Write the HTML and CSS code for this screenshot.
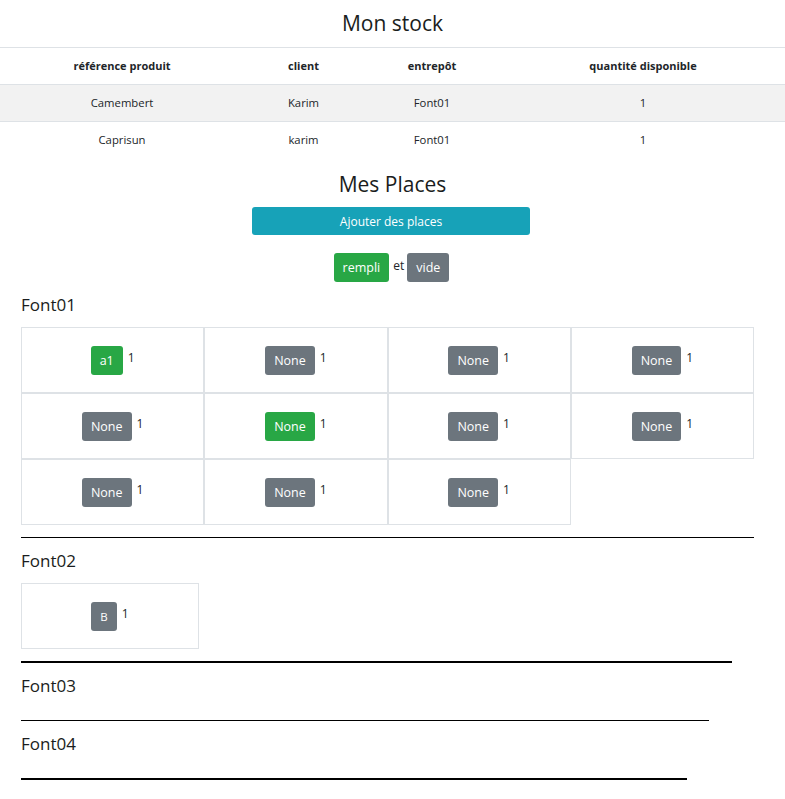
FILE: index.html
```html
<!DOCTYPE html>
<html lang="fr">
<head>
<meta charset="utf-8">
<title>Mon stock</title>
<link rel="stylesheet" href="styles.css">
</head>
<body>
<h2 class="title title-stock">Mon stock</h2>
<table class="stock">
  <colgroup>
    <col class="c1"><col class="c2"><col class="c3"><col class="c4">
  </colgroup>
  <thead>
    <tr><th>référence produit</th><th>client</th><th>entrepôt</th><th>quantité disponible</th></tr>
  </thead>
  <tbody>
    <tr class="striped"><td>Camembert</td><td>Karim</td><td>Font01</td><td>1</td></tr>
    <tr><td>Caprisun</td><td>karim</td><td>Font01</td><td>1</td></tr>
  </tbody>
</table>

<h2 class="title title-places">Mes Places</h2>
<div class="add-row"><button class="btn btn-info btn-add">Ajouter des places</button></div>
<div class="legend"><span class="btn btn-green">rempli</span><span class="et">et</span><span class="btn btn-gray">vide</span></div>

<div class="places">
  <section class="depot w1">
    <h4 class="depot-name">Font01</h4>
    <div class="grid">
      <div class="cell"><span class="btn btn-green">a1</span><span class="qty">1</span></div>
      <div class="cell"><span class="btn btn-gray">None</span><span class="qty">1</span></div>
      <div class="cell"><span class="btn btn-gray">None</span><span class="qty">1</span></div>
      <div class="cell"><span class="btn btn-gray">None</span><span class="qty">1</span></div>
      <div class="cell"><span class="btn btn-gray">None</span><span class="qty">1</span></div>
      <div class="cell"><span class="btn btn-green">None</span><span class="qty">1</span></div>
      <div class="cell"><span class="btn btn-gray">None</span><span class="qty">1</span></div>
      <div class="cell"><span class="btn btn-gray">None</span><span class="qty">1</span></div>
      <div class="cell"><span class="btn btn-gray">None</span><span class="qty">1</span></div>
      <div class="cell"><span class="btn btn-gray">None</span><span class="qty">1</span></div>
      <div class="cell"><span class="btn btn-gray">None</span><span class="qty">1</span></div>
    </div>
    <hr class="sep thin">
  </section>
  <section class="depot w2">
    <h4 class="depot-name">Font02</h4>
    <div class="grid">
      <div class="cell"><span class="btn btn-gray btn-b">B</span><span class="qty">1</span></div>
    </div>
    <hr class="sep thick">
  </section>
  <section class="depot w3">
    <h4 class="depot-name">Font03</h4>
    <div class="grid"></div>
    <hr class="sep thin">
  </section>
  <section class="depot w4">
    <h4 class="depot-name">Font04</h4>
    <div class="grid"></div>
    <hr class="sep thick">
  </section>
</div>
</body>
</html>
```
FILE: styles.css
```css
* { box-sizing: border-box; }
body {
  margin: 0;
  font-family: "Open Sans", "Noto Sans", sans-serif;
  font-size: 12px;
  color: #212529;
  background: #fff;
}
.title {
  font-weight: 400;
  font-size: 21px;
  line-height: 26px;
  text-align: center;
  margin: 0;
  color: #1a1d20;
}
.title-stock { padding-top: 10px; margin-bottom: 11px; }
.title-places { margin-top: 13px; margin-bottom: 10px; }

.stock {
  width: 100%;
  border-collapse: collapse;
  table-layout: fixed;
}
.stock .c1 { width: 244px; }
.stock .c2 { width: 119px; }
.stock .c3 { width: 138px; }
.stock th, .stock td {
  text-align: center;
  padding: 9px 4px;
  line-height: 18px;
  border-top: 1px solid #dee2e6;
  font-size: 11.3px;
}
.stock th { font-weight: 700; font-size: 11px; }
.stock .striped td { background: #f2f2f2; }

.add-row { display: flex; justify-content: center; padding-right: 3px; }
.btn {
  display: inline-flex;
  align-items: center;
  justify-content: center;
  border: 0;
  border-radius: 3px;
  color: #fff;
  font-family: inherit;
  font-size: 12.5px;
  height: 29px;
  padding: 0 9px;
}
.btn-info { background: #17a2b8; }
.btn-green { background: #28a745; }
.btn-gray { background: #6c757d; }
.btn-add { width: 278px; height: 28px; font-size: 12px; }

.legend {
  display: flex;
  justify-content: center;
  align-items: center;
  margin-top: 18px;
  padding-right: 2px;
}
.legend .et { margin: 0 3px 0 4px; position: relative; top: -2px; }

.places { padding-left: 21px; margin-top: 12px; }
.depot.w1 { width: 733px; }
.depot.w2 { width: 711px; }
.depot.w3 { width: 688px; }
.depot.w4 { width: 666px; }
.depot-name {
  font-size: 17px;
  font-weight: 400;
  line-height: 22px;
  margin: 0 0 11px;
  color: #1a1d20;
}
.grid {
  display: grid;
  grid-template-columns: repeat(4, 1fr);
}
.cell {
  height: 66px;
  border: 1px solid #dee2e6;
  display: flex;
  justify-content: center;
  align-items: center;
}
.qty {
  margin-left: 5px;
  margin-top: -5px;
  font-size: 12px;
  line-height: 14px;
}
.btn-b { padding: 0 9px; font-size: 11.5px; }
.sep {
  border: 0;
  margin: 12px 0 12px;
  background: #000;
}
.sep.thin { height: 1px; }
.sep.thick { height: 2px; }
```
